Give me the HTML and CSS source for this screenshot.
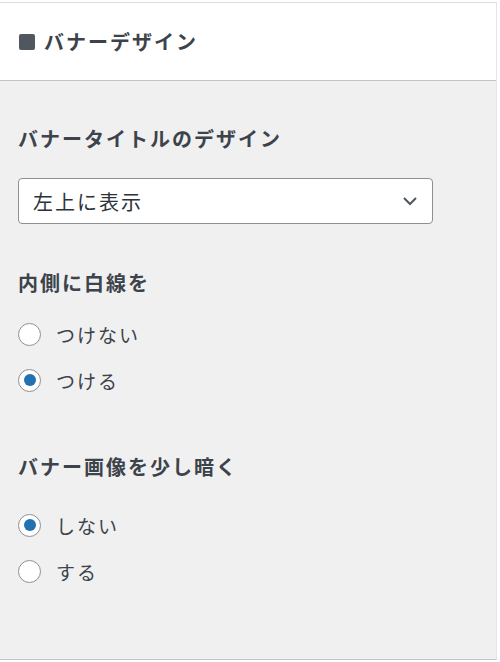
FILE: index.html
```html
<!DOCTYPE html>
<html lang="ja">
<head>
  <meta charset="UTF-8">
  <meta name="viewport" content="width=device-width, initial-scale=1.0">
  <title>バナーデザイン</title>
  <link rel="stylesheet" href="styles.css">
</head>
<body>

  <div class="panel">
    <div class="panelHead">
      <h2><span class="mark"></span>バナーデザイン</h2>
    </div>

    <div class="panelBody">
      <div class="field">
        <label class="fieldTitle" for="bannerTitle">バナータイトルのデザイン</label>
        <div class="selectBox">
          <select id="bannerTitle">
            <option>左上に表示</option>
            <option>中央に表示</option>
            <option>表示しない</option>
          </select>
          <svg class="chevron" width="16" height="10" viewBox="0 0 16 10">
            <path d="M2 2 L8 8 L14 2" fill="none" stroke="#50575e" stroke-width="2"/>
          </svg>
        </div>
      </div>

      <div class="field radioField">
        <div class="fieldTitle">内側に白線を</div>
        <label class="radio"><input type="radio" name="whiteLine"><span>つけない</span></label>
        <label class="radio"><input type="radio" name="whiteLine" checked><span>つける</span></label>
      </div>

      <div class="field radioField">
        <div class="fieldTitle wide">バナー画像を少し暗く</div>
        <label class="radio"><input type="radio" name="darken" checked><span>しない</span></label>
        <label class="radio"><input type="radio" name="darken"><span>する</span></label>
      </div>
    </div>
  </div>

</body>
</html>
```

FILE: styles.css
```css
body {
  margin: 0;
  padding-top: 2px;
  background-color: #fff;
  font-family: "Noto Sans CJK JP", "Noto Sans", sans-serif;
  color: #3c434a;
}

.panel {
  width: 497px;
  border-top: 1px solid #dcdcde;
  border-right: 1px solid #e4e4e6;
  border-bottom: 1px solid #c3c4c7;
  box-sizing: border-box;
}

.panelHead {
  height: 77px;
  background-color: #fff;
  border-bottom: 1px solid #c3c4c7;
  display: flex;
  align-items: center;
  padding-left: 19px;
}

.panelHead h2 {
  margin: 0;
  font-size: 20px;
  font-weight: 700;
  letter-spacing: 2px;
  display: flex;
  align-items: center;
  color: #3c434a;
}

.mark {
  width: 16px;
  height: 16px;
  background-color: #50575e;
  border-radius: 2px;
  margin-right: 9px;
}

.panelBody {
  background-color: #f0f0f1;
  height: 578px;
  padding: 40px 18px 0;
  box-sizing: border-box;
}

.field {
  margin-bottom: 41px;
}

.radioField {
  margin-bottom: 46px;
}

.fieldTitle {
  display: block;
  font-size: 20px;
  font-weight: 700;
  letter-spacing: 2px;
  line-height: 36px;
  margin-bottom: 21px;
}

.radioField .fieldTitle {
  margin-bottom: 10px;
}

.radioField .fieldTitle.wide {
  margin-bottom: 17px;
}

.selectBox {
  position: relative;
  width: 415px;
}

.selectBox select {
  appearance: none;
  width: 100%;
  height: 46px;
  border: 1px solid #8c8f94;
  border-radius: 4px;
  background-color: #fff;
  padding: 0 40px 0 14px;
  font-family: inherit;
  font-size: 20px;
  letter-spacing: 2px;
  color: #2c3338;
}

.chevron {
  position: absolute;
  right: 15px;
  top: 18px;
  pointer-events: none;
}

.radio {
  display: flex;
  align-items: center;
  height: 46px;
  font-size: 19px;
  letter-spacing: 2px;
}

.radio input {
  appearance: none;
  width: 23px;
  height: 23px;
  margin: 0 15px 0 0;
  border: 1px solid #8c8f94;
  border-radius: 50%;
  background-color: #fff;
  display: flex;
  align-items: center;
  justify-content: center;
}

.radio input:checked::before {
  content: "";
  width: 12px;
  height: 12px;
  border-radius: 50%;
  background-color: #2271b1;
}
```
